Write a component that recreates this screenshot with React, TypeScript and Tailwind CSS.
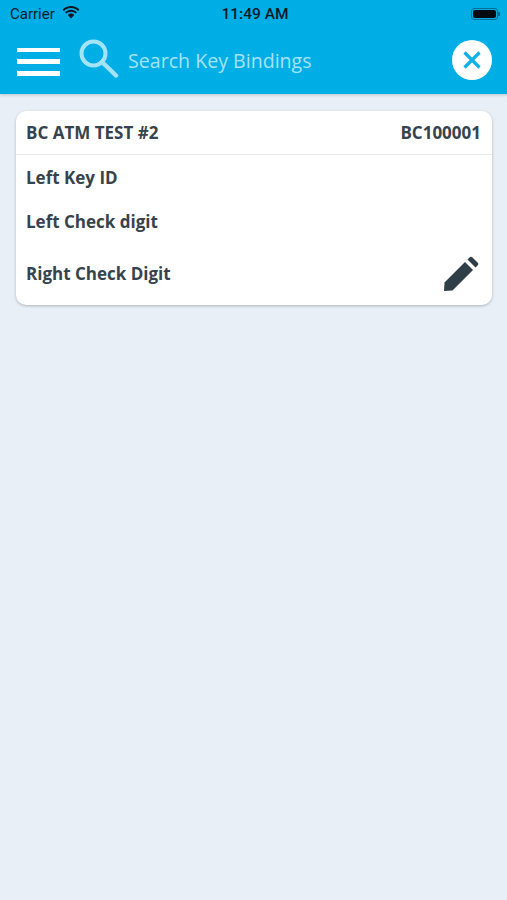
import React from 'react';

function Wifi() {
  return (
    <svg width="18" height="13" viewBox="0 0 20 14" fill="#0a1620" preserveAspectRatio="none" className="-mt-[3px]">
      <path d="M10 2.200c3.100 0 5.900 1.200 8 3.200l1.300-1.500C16.900 1.500 13.600 0 10 0S3.100 1.500.7 3.900L2 5.400c2.100-2 4.900-3.200 8-3.200z" />
      <path d="M10 6.200c2 0 3.800.8 5.200 2l1.400-1.500C14.800 5 12.500 4 10 4S5.200 5 3.400 6.700l1.400 1.500c1.400-1.200 3.200-2 5.200-2z" />
      <path d="M10 8.200c-1.400 0-2.600.5-3.500 1.400L10 13.500l3.500-3.900c-.9-.9-2.100-1.400-3.500-1.400z" />
    </svg>
  );
}

function StatusBar() {
  return (
    <div className="h-[27px] flex items-center justify-between pl-[10px] pr-[7px] pt-[1px] font-['Roboto','Liberation_Sans',sans-serif] text-[#0b1a26]">
      <div className="flex items-center gap-[7px] w-[120px]">
        <span className="text-[15px] leading-none">Carrier</span>
        <Wifi />
      </div>
      <span className="text-[15.500px] leading-none font-medium mt-[1px]">11:49 AM</span>
      <div className="w-[120px] flex justify-end items-center">
        <div className="w-[27px] h-[12px] rounded-[3px] border border-[#0b6c94] p-[1px]">
          <div className="w-full h-full rounded-[2px] bg-[#050a10]" />
        </div>
        <div className="w-[2px] h-[4px] bg-[#0b6c94]" />
      </div>
    </div>
  );
}

function SearchIcon() {
  return (
    <svg width="40" height="40" viewBox="0 0 40 40" fill="none" stroke="#a5e3f8">
      <circle cx="14.500" cy="14.500" r="12" strokeWidth="4" />
      <path d="M23 23l14 13.500" strokeWidth="4.500" strokeLinecap="round" />
    </svg>
  );
}

function Header() {
  return (
    <header className="bg-[#00aee6] h-[94px] shadow-[0_1px_3px_rgba(0,0,0,0.2)] relative">
      <StatusBar />
      <div className="h-[67px] flex items-center pl-[17px] pr-[15px] pb-[1px]">
        <div className="w-[43px] h-[28px] flex flex-col justify-between mt-[3px]">
          <div className="h-[4.500px] bg-white" />
          <div className="h-[4.500px] bg-white" />
          <div className="h-[4.500px] bg-white" />
        </div>
        <div className="ml-[19px] -mt-[2px]">
          <SearchIcon />
        </div>
        <span className="ml-[9px] flex-1 text-[19.600px] leading-none text-[#a5e3f8] font-['Open_Sans',sans-serif] mt-[1px]">
          Search Key Bindings
        </span>
        <div className="w-[40px] h-[40px] rounded-full bg-white flex items-center justify-center">
          <svg width="20" height="20" viewBox="0 0 20 20" stroke="#0fb0e6" strokeWidth="3.200">
            <path d="M2.500 2.500l15 15M17.500 2.500l-15 15" />
          </svg>
        </div>
      </div>
    </header>
  );
}

function Pencil() {
  return (
    <svg width="36" height="36" viewBox="0 0 36 36" fill="#2f3f48">
      <path d="M1 35l.5-8.500L22 6l8 8L9.500 34.500z" />
      <path d="M24.500 3.500l2.300-2.300c.7-.7 1.700-.7 2.400 0l5.600 5.600c.7.700.7 1.700 0 2.400l-2.300 2.300z" />
    </svg>
  );
}

export default function App() {
  return (
    <div className="min-h-[900px] bg-[#e8eff7] font-['Open_Sans',sans-serif]">
      <Header />
      <div className="pl-[16px] pr-[15px] pt-[17px]">
        <div className="bg-white rounded-[10px] shadow-[0_1px_3px_rgba(0,0,0,0.25)] text-[#36434c] font-bold text-[17px] leading-[22px]">
          <div className="h-[44px] border-b border-[#e6e9ec] flex items-center justify-between pl-[10px] pr-[11px]">
            <span>BC ATM TEST #2</span>
            <span>BC100001</span>
          </div>
          <div className="pl-[10px] pr-[13px]">
            <div className="h-[46px] flex items-center">Left Key ID</div>
            <div className="h-[41px] flex items-center">Left Check digit</div>
            <div className="h-[63px] flex items-center justify-between pt-[1px]">
              <span>Right Check Digit</span>
              <Pencil />
            </div>
          </div>
        </div>
      </div>
    </div>
  );
}
